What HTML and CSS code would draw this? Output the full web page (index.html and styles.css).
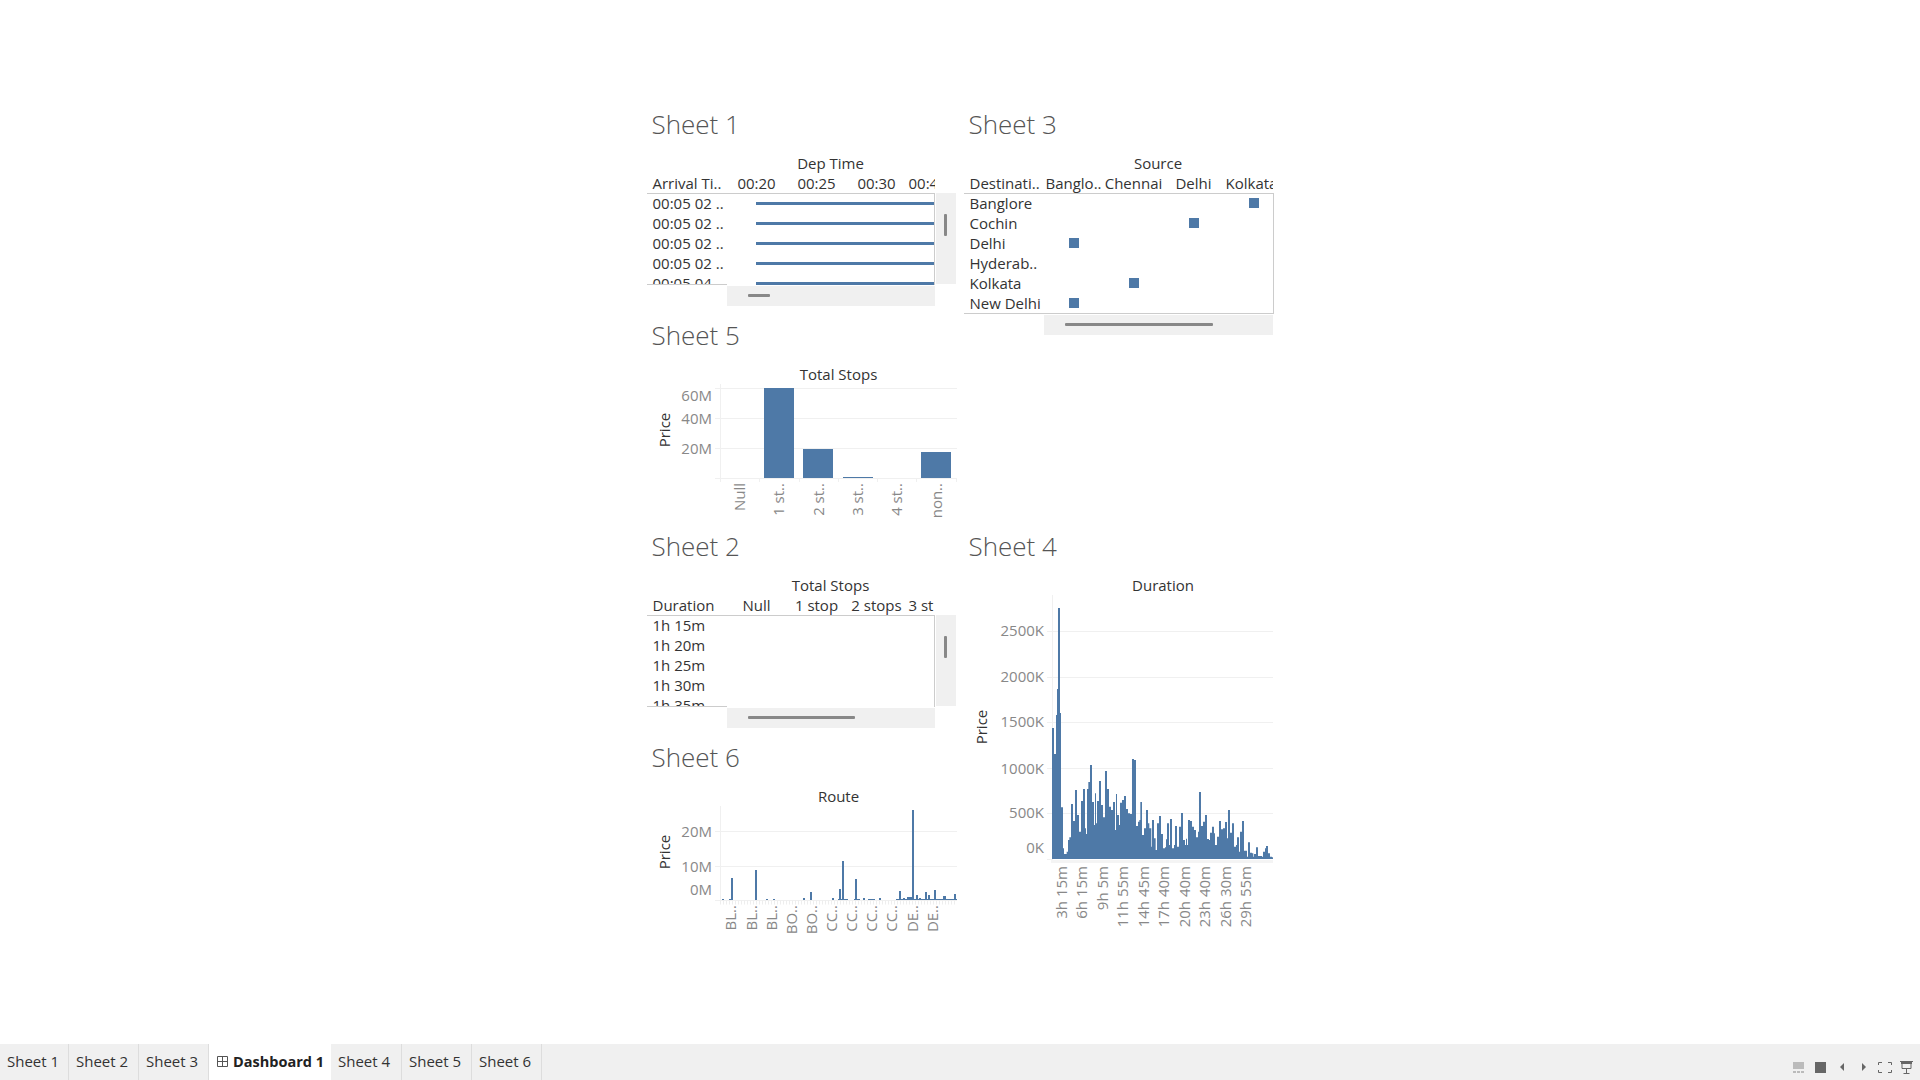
FILE: index.html
```html
<!DOCTYPE html>
<html lang="en">
<head>
<meta charset="utf-8">
<title>Dashboard 1</title>
<link rel="stylesheet" href="styles.css">
</head>
<body>
<main class="dashboard">
  <div class="board">
    <section class="sheet">
      <h2 class="title">Sheet 1</h2>
      <div class="caption cap-table">Dep Time</div>
      <div class="xt-head"><div class="h-first">Arrival Ti..</div><div class="h-col">00:20</div><div class="h-col">00:25</div><div class="h-col">00:30</div><div class="h-col h-clip">00:45</div></div>
      <div class="xt-main">
        <div class="xt-table">
          <div class="labels"><div class="cell">00:05 02 ..</div><div class="cell">00:05 02 ..</div><div class="cell">00:05 02 ..</div><div class="cell">00:05 02 ..</div><div class="cell">00:05 04 ..</div></div>
          <div class="plot"><div class="lane"><i class="gantt"></i></div><div class="lane"><i class="gantt"></i></div><div class="lane"><i class="gantt"></i></div><div class="lane"><i class="gantt"></i></div><div class="lane"><i class="gantt"></i></div></div>
        </div>
        <div class="vscroll"><i class="vthumb"></i></div>
      </div>
      <div class="hscroll"><i class="hthumb short"></i></div>
    </section>

    <section class="sheet tall">
      <h2 class="title">Sheet 3</h2>
      <div class="caption cap-wide">Source</div>
      <div class="xt-head wide"><div class="h-first">Destinati..</div><div class="h-col">Banglo..</div><div class="h-col">Chennai</div><div class="h-col">Delhi</div><div class="h-col h-clip">Kolkata</div></div>
      <div class="xt-table wide full">
        <div class="labels"><div class="cell">Banglore</div><div class="cell">Cochin</div><div class="cell">Delhi</div><div class="cell">Hyderab..</div><div class="cell">Kolkata</div><div class="cell">New Delhi</div></div>
        <div class="plot matrix">
          <div class="lane"><i class="sq c4"></i></div>
          <div class="lane"><i class="sq c3"></i></div>
          <div class="lane"><i class="sq c1"></i></div>
          <div class="lane"></div>
          <div class="lane"><i class="sq c2"></i></div>
          <div class="lane"><i class="sq c1"></i></div>
        </div>
      </div>
      <div class="hscroll wide"><i class="hthumb long"></i></div>
    </section>

    <section class="sheet">
      <h2 class="title">Sheet 5</h2>
      <div class="caption cap-plot">Total Stops</div>
      <svg class="chart h145" viewBox="647 384 310 145">
        <path class="grid" d="M715 388.5H957M715 418.5H957M715 448.5H957M715 478.5H957M720.500 384V482M759.500 478V482M799.500 478V482M838.500 478V482M877.500 478V482M916.500 478V482M956.500 478V482"/>
        <path class="mark" d="M764 388H794V478H764ZM803 449H833V478H803ZM843 477H873V478H843ZM921 452H951V478H921Z"/>
        <text class="tick" x="712" y="401" text-anchor="end">60M</text>
        <text class="tick" x="712" y="424" text-anchor="end">40M</text>
        <text class="tick" x="712" y="454" text-anchor="end">20M</text>
        <text class="axis" transform="translate(670 430) rotate(-90)" text-anchor="middle">Price</text>
        <text class="tick" transform="translate(745 483) rotate(-90)" text-anchor="end">Null</text>
        <text class="tick" transform="translate(784 483) rotate(-90)" text-anchor="end">1 st..</text>
        <text class="tick" transform="translate(824 483) rotate(-90)" text-anchor="end">2 st..</text>
        <text class="tick" transform="translate(863 483) rotate(-90)" text-anchor="end">3 st..</text>
        <text class="tick" transform="translate(902 483) rotate(-90)" text-anchor="end">4 st..</text>
        <text class="tick" transform="translate(942 483) rotate(-90)" text-anchor="end">non..</text>
      </svg>
    </section>

    <section class="sheet">
      <h2 class="title">Sheet 2</h2>
      <div class="caption cap-table">Total Stops</div>
      <div class="xt-head"><div class="h-first">Duration</div><div class="h-col">Null</div><div class="h-col">1 stop</div><div class="h-col">2 stops</div><div class="h-col h-clip">3 st</div></div>
      <div class="xt-main">
        <div class="xt-table">
          <div class="labels"><div class="cell">1h 15m</div><div class="cell">1h 20m</div><div class="cell">1h 25m</div><div class="cell">1h 30m</div><div class="cell">1h 35m</div></div>
          <div class="plot"></div>
        </div>
        <div class="vscroll"><i class="vthumb"></i></div>
      </div>
      <div class="hscroll"><i class="hthumb mid"></i></div>
    </section>

    <section class="sheet tall">
      <h2 class="title">Sheet 4</h2>
      <div class="caption cap-dur">Duration</div>
      <svg class="chart h356" viewBox="964 595 310 356">
        <path class="grid" d="M1047 631.500H1273M1047 677.500H1273M1047 722.500H1273M1047 768.500H1273M1047 813.500H1273M1047 859.500H1052M1052.500 595V860"/>
        <rect class="band" x="1051" y="860" width="222" height="3"/>
        <g transform="translate(1052 740) scale(.3333) translate(-276 0)">
          <path class="mark" d="M276 357V-36H282V42H288V-75H291V-153H294V-396H300V-81H303V202H309V325H312V342H320V335H324V300H328V292H333V192H339V243H345V150H351V225H357V275H363V183H369V147H375V265H378V282H381V147H385V126H390V75H396V186H402V255H405V160H408V250H411V183H417V123H423V195H429V232H435V93H441V147H447V200H453V210H459V186H465V270H468V162H471V225H477V255H480V188H486V180H492V168H498V207H504V220H510V222H516V57H522V60H528V258H534V245H538V240H541V186H546V285H552V265H558V210H564V250H568V265H574V320H576V240H582V295H587V330H591V250H597V228H603V282H609V325H615V322H618V298H621V250H627V315H630V237H636V325H642V315H645V258H651V320H657V260H663V219H669V300H675V315H678V296H681V315H684V240H690V243H696V260H702V270H708V292H714V275H717V156H723V258H729V245H735V225H741V297H747V300H750V278H756V260H762V280H765V315H771V290H777V243H783V268H789V265H795V246H801V295H804V210H810V278H816V250H822V320H828V315H831V292H837V335H840V275H846V243H852V332H861V350H864V307H870V338H876V340H880V350H882V342H888V322H894V348H906V350H909V335H915V325H918V318H924V340H930V350H936V352H939V357Z"/>
        </g>
        <text class="tick" x="1044" y="636" text-anchor="end">2500K</text>
        <text class="tick" x="1044" y="682" text-anchor="end">2000K</text>
        <text class="tick" x="1044" y="727" text-anchor="end">1500K</text>
        <text class="tick" x="1044" y="774" text-anchor="end">1000K</text>
        <text class="tick" x="1044" y="818" text-anchor="end">500K</text>
        <text class="tick" x="1044" y="853" text-anchor="end">0K</text>
        <text class="axis" transform="translate(987 727) rotate(-90)" text-anchor="middle">Price</text>
        <text class="tick" transform="translate(1067 866) rotate(-90)" text-anchor="end">3h 15m</text>
        <text class="tick" transform="translate(1087 866) rotate(-90)" text-anchor="end">6h 15m</text>
        <text class="tick" transform="translate(1108 866) rotate(-90)" text-anchor="end">9h 5m</text>
        <text class="tick" transform="translate(1128 866) rotate(-90)" text-anchor="end">11h 55m</text>
        <text class="tick" transform="translate(1149 866) rotate(-90)" text-anchor="end">14h 45m</text>
        <text class="tick" transform="translate(1169 866) rotate(-90)" text-anchor="end">17h 40m</text>
        <text class="tick" transform="translate(1190 866) rotate(-90)" text-anchor="end">20h 40m</text>
        <text class="tick" transform="translate(1210 866) rotate(-90)" text-anchor="end">23h 40m</text>
        <text class="tick" transform="translate(1231 866) rotate(-90)" text-anchor="end">26h 30m</text>
        <text class="tick" transform="translate(1251 866) rotate(-90)" text-anchor="end">29h 55m</text>
      </svg>
    </section>

    <section class="sheet">
      <h2 class="title">Sheet 6</h2>
      <div class="caption cap-plot">Route</div>
      <svg class="chart h145" viewBox="647 806 310 145">
        <path class="grid" d="M715 831.500H957M715 866.500H957M715 900.500H957M720.500 806V901"/>
        <path class="ticks" d="M720 902.500H957"/>
        <path class="mark" d="M722 899H724V900H722ZM729 899H733V900H729ZM731 878H733V900H731ZM755 870H757V900H755ZM766 899H768V900H766ZM773 899H775V900H773ZM803 898H805V900H803ZM810 892H812V900H810ZM832 898H834V900H832ZM838 899H848V900H838ZM839 889H841V900H839ZM842 861H844V900H842ZM854 899H860V900H854ZM855 879H857V900H855ZM863 898H865V900H863ZM868 899H875V900H868ZM879 898H881V900H879ZM896 899H957V900H896ZM899 891H901V900H899ZM903 898H905V900H903ZM907 897H914V900H907ZM912 810H914V900H912ZM916 895H918V900H916ZM919 898H921V900H919ZM925 892H927V900H925ZM928 895H930V900H928ZM934 890H936V900H934ZM943 896H946V900H943ZM954 894H956V900H954Z"/>
        <text class="tick" x="712" y="837" text-anchor="end">20M</text>
        <text class="tick" x="712" y="872" text-anchor="end">10M</text>
        <text class="tick" x="712" y="895" text-anchor="end">0M</text>
        <text class="axis" transform="translate(670 852) rotate(-90)" text-anchor="middle">Price</text>
        <text class="tick" transform="translate(736 905) rotate(-90)" text-anchor="end">BL..</text>
        <text class="tick" transform="translate(757 905) rotate(-90)" text-anchor="end">BL..</text>
        <text class="tick" transform="translate(777 905) rotate(-90)" text-anchor="end">BL..</text>
        <text class="tick" transform="translate(797 905) rotate(-90)" text-anchor="end">BO..</text>
        <text class="tick" transform="translate(817 905) rotate(-90)" text-anchor="end">BO..</text>
        <text class="tick" transform="translate(837 905) rotate(-90)" text-anchor="end">CC..</text>
        <text class="tick" transform="translate(857 905) rotate(-90)" text-anchor="end">CC..</text>
        <text class="tick" transform="translate(877 905) rotate(-90)" text-anchor="end">CC..</text>
        <text class="tick" transform="translate(897 905) rotate(-90)" text-anchor="end">CC..</text>
        <text class="tick" transform="translate(918 905) rotate(-90)" text-anchor="end">DE..</text>
        <text class="tick" transform="translate(938 905) rotate(-90)" text-anchor="end">DE..</text>
      </svg>
    </section>
  </div>
</main>

<footer class="tabbar">
  <nav class="tabs">
    <div class="tab t69">Sheet 1</div>
    <div class="tab t70">Sheet 2</div>
    <div class="tab t70">Sheet 3</div>
    <div class="tab active">
      <svg class="dash-icon" viewBox="0 0 11 11"><path d="M.5 .5H10.500V10.500H.5ZM5.500 .5V10.500M.5 5.500H10.500"/></svg>
      <span>Dashboard 1</span>
    </div>
    <div class="tab t71">Sheet 4</div>
    <div class="tab t70">Sheet 5</div>
    <div class="tab t70">Sheet 6</div>
  </nav>
  <div class="controls">
    <svg class="ctl" width="11" height="11" viewBox="0 0 11 11"><path fill="#bbb" d="M0 0H11V7H0ZM0 9H3V11H0ZM4 9H7V11H4ZM8 9H11V11H8Z"/></svg>
    <svg class="ctl g2" width="11" height="11" viewBox="0 0 11 11"><path fill="#666" d="M0 0H11V11H0Z"/></svg>
    <svg class="ctl g3" width="4" height="8" viewBox="0 0 4 8"><path fill="#666" d="M4 0V8L0 4Z"/></svg>
    <svg class="ctl g4" width="4" height="8" viewBox="0 0 4 8"><path fill="#666" d="M0 0V8L4 4Z"/></svg>
    <svg class="ctl g5" width="14" height="11" viewBox="0 0 14 11"><path fill="none" stroke="#666" d="M.5 3V.5H4M10 .5H13.500V3M13.500 8V10.500H10M4 10.500H.5V8"/></svg>
    <svg class="ctl g6" width="13" height="13" viewBox="0 0 13 13"><path fill="none" stroke="#666" d="M0 .5H13M2 2.500H11V7.500H2ZM6.500 7.500V12.500M3.500 12.500H9.500"/><path fill="#666" d="M1 1H12V3H1Z"/></svg>
  </div>
</footer>
</body>
</html>
```

FILE: styles.css
```css
* { box-sizing: border-box; }
html, body { height: 100%; }
body {
  margin: 0;
  display: flex;
  flex-direction: column;
  height: 100vh;
  overflow: hidden;
  background: #fff;
  font-family: "Open Sans", "Liberation Sans", sans-serif;
  font-size: 15px;
  color: #333;
}

.dashboard {
  flex: 1;
  display: flex;
  justify-content: center;
  padding-top: 107px;
  min-height: 0;
}
.board {
  display: grid;
  grid-template-columns: 310px 310px;
  grid-template-rows: repeat(4, 211px);
  column-gap: 7px;
  width: 627px;
}
.sheet { min-width: 0; }
.sheet:nth-child(1) { grid-column: 1; grid-row: 1; }
.sheet:nth-child(2) { grid-column: 2; grid-row: 1 / span 2; }
.sheet:nth-child(3) { grid-column: 1; grid-row: 2; }
.sheet:nth-child(4) { grid-column: 1; grid-row: 3; }
.sheet:nth-child(5) { grid-column: 2; grid-row: 3 / span 2; }
.sheet:nth-child(6) { grid-column: 1; grid-row: 4; }

.title {
  margin: 0;
  height: 46px;
  padding: 2px 0 0 5px;
  font-size: 26px;
  line-height: 30px;
  font-weight: 300;
  color: #555;
}

.caption {
  height: 20px;
  line-height: 20px;
  text-align: center;
  color: #333;
}
.cap-table { width: 288px; padding-left: 80px; }
.cap-wide { width: 309px; padding-left: 80px; }
.cap-plot { width: 309px; padding-left: 75px; }
.cap-dur { width: 309px; padding-left: 90px; }

.xt-head {
  display: flex;
  width: 288px;
  height: 20px;
  line-height: 20px;
  overflow: hidden;
  white-space: nowrap;
}
.xt-head.wide { width: 309px; }
.h-first { flex: 0 0 80px; padding-left: 6px; white-space: nowrap; }
.h-col { flex: 0 0 60px; text-align: center; }
.h-clip { padding-left: 2px; text-align: left; }

.xt-main { display: flex; height: 92px; }
.xt-table {
  display: flex;
  width: 288px;
  height: 92px;
  border-top: 1px solid #ccc;
  overflow: hidden;
}
.xt-table.wide { width: 310px; }
.xt-table.full {
  height: 121px;
  border: 1px solid #ccc;
  border-left: 0;
}
.labels {
  flex: 0 0 80px;
  overflow: hidden;
  border-bottom: 1px solid #ccc;
  height: 92px;
  margin-top: -1px;
}
.xt-table.full .labels { height: 120px; border-bottom: 0; }
.cell {
  height: 20px;
  line-height: 20px;
  padding-left: 6px;
  white-space: nowrap;
}
.plot {
  flex: 1;
  overflow: hidden;
  border-right: 1px solid #ccc;
  margin-top: -1px;
}
.xt-table.full .plot { border-right: 0; }
.lane {
  height: 20px;
  display: flex;
  align-items: center;
}
.gantt {
  display: block;
  height: 3px;
  width: 100%;
  margin-left: 29px;
  background: #4e79a7;
}
.sq {
  display: block;
  width: 10px;
  height: 10px;
  background: #4e79a7;
}
.c1 { margin-left: 25px; }
.c2 { margin-left: 85px; }
.c3 { margin-left: 145px; }
.c4 { margin-left: 205px; }

.vscroll {
  flex: 0 0 20px;
  margin-left: 1px;
  height: 91px;
  background: #f0f0f0;
  padding: 21px 8px 0;
}
.vthumb {
  display: block;
  width: 3px;
  height: 22px;
  background: #888;
  border-radius: 1px;
}
.hscroll {
  margin: 1px 0 0 80px;
  width: 208px;
  height: 20px;
  background: #f0f0f0;
  padding: 8px 0 0 21px;
}
.hscroll.wide { width: 229px; }
.hthumb {
  display: block;
  height: 3px;
  background: #888;
  border-radius: 1px;
}
.short { width: 22px; }
.mid { width: 107px; }
.long { width: 148px; }

.chart { display: block; width: 310px; overflow: visible; }
.h145 { height: 145px; }
.h356 { height: 356px; }
.grid { fill: none; stroke: #f0f0f0; stroke-width: 1; }
.ticks { fill: none; stroke: #eee; stroke-width: 4; stroke-dasharray: 1 2; }
.band { fill: #f4f4f4; }
.mark { fill: #4e79a7; }
.tick { font-size: 15px; fill: #888; }
.axis { font-size: 15px; fill: #333; }

.tabbar {
  flex: 0 0 36px;
  display: flex;
  justify-content: space-between;
  background: #f0f0f0;
}
.tabs { display: flex; }
.tab {
  height: 36px;
  line-height: 35px;
  padding-left: 7px;
  border-right: 1px solid #ddd;
  white-space: nowrap;
}
.t69 { width: 69px; }
.t70 { width: 70px; }
.t71 { width: 71px; }
.tab.active {
  width: 122px;
  display: flex;
  align-items: center;
  gap: 5px;
  padding: 0 0 2px 8px;
  background: #fff;
  border-right: 0;
  font-size: 14.5px;
  font-weight: 700;
  color: #222;
}
.dash-icon {
  flex: none;
  width: 11px;
  height: 11px;
  fill: none;
  stroke: #555;
  stroke-width: 1;
}
.controls {
  display: flex;
  align-items: center;
  padding: 10px 7px 0 0;
}
.g2 { margin-left: 11px; }
.g3 { margin-left: 14px; }
.g4 { margin-left: 18px; }
.g5 { margin-left: 12px; }
.g6 { margin-left: 8px; }
```
